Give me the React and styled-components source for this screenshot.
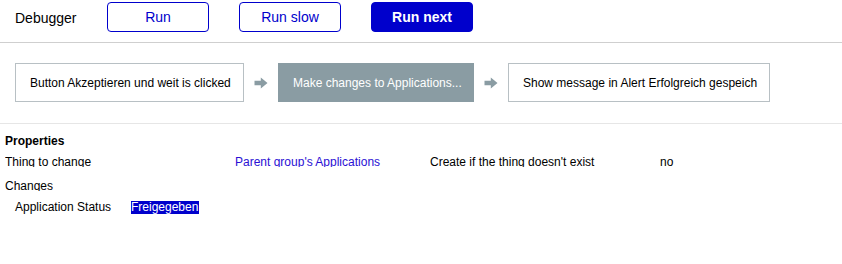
import React from "react";
import styled, { createGlobalStyle } from "styled-components";

const Global = createGlobalStyle`
  html, body { margin: 0; padding: 0; background: #fff; }
  body { font-family: "Liberation Sans", Arial, sans-serif; color: #000; }
`;

const Page = styled.div`
  width: 842px;
  height: 264px;
  overflow: hidden;
`;

const Toolbar = styled.div`
  display: flex;
  align-items: center;
  height: 33px;
  padding: 0 0 9px 15px;
  border-bottom: 1px solid #cfcfcf;
  box-sizing: content-box;
`;

const Title = styled.div`
  font-size: 14px;
  width: 92px;
  line-height: 33px;
  padding-top: 3px;
`;

const Button = styled.button`
  width: 102px;
  height: 30px;
  margin-right: 30px;
  box-sizing: border-box;
  border-radius: 4px;
  border: 1px solid #0000cc;
  background: ${(p) => (p.$primary ? "#0000cc" : "#fff")};
  color: ${(p) => (p.$primary ? "#fff" : "#0000cc")};
  font-family: "Liberation Sans", Arial, sans-serif;
  font-size: 14px;
  font-weight: ${(p) => (p.$primary ? "bold" : "normal")};
  padding: 0;
  cursor: pointer;
`;

const Flow = styled.div`
  display: flex;
  align-items: center;
  padding: 20px 15px 21px 15px;
  border-bottom: 1px solid #e6e6e6;
`;

const Step = styled.div`
  height: 39px;
  box-sizing: border-box;
  padding: 0 14px;
  display: flex;
  align-items: center;
  font-size: 12px;
  white-space: nowrap;
  border: 1px solid ${(p) => (p.$active ? "#8a9ca3" : "#b8c0c4")};
  background: ${(p) => (p.$active ? "#8a9ca3" : "#fff")};
  color: ${(p) => (p.$active ? "#fff" : "#000")};
  width: ${(p) => p.$w}px;
`;

const ArrowWrap = styled.div`
  width: 14px;
  margin: 0 10px;
  display: flex;
  align-items: center;
  height: 12px;
`;

const Arrow = () => (
  <ArrowWrap>
    <svg width="14" height="12" viewBox="0 0 14 12">
      <path d="M0.5 3.8 H6.8 V0.5 L13.5 6 L6.8 11.5 V8.2 H0.5 Z" fill="#8a9ca3" />
    </svg>
  </ArrowWrap>
);

const Props = styled.div`
  padding: 10px 5px 0 5px;
  font-size: 12px;
`;

const Heading = styled.div`
  font-weight: bold;
  line-height: 14px;
  height: 14px;
`;

const Grid = styled.div`
  display: grid;
  grid-template-columns: 230px 195px 230px 1fr;
  margin-top: 7px;
`;

const Cell = styled.div`
  line-height: 14px;
  height: 12px;
  overflow: hidden;
  white-space: nowrap;
  color: ${(p) => (p.$link ? "#2a10d4" : "#000")};
`;

const SubHeading = styled(Cell)`
  margin-top: 12px;
`;

const ChangeRow = styled.div`
  display: flex;
  align-items: center;
  padding-left: 10px;
  margin-top: 9px;
  line-height: 14px;
`;

const ChangeLabel = styled.div`
  width: 116px;
`;

const Highlight = styled.span`
  background: #0000cc;
  color: #fff;
  line-height: 13px;
  padding-right: 1px;
`;

export default function App() {
  return (
    <Page>
      <Global />
      <Toolbar>
        <Title>Debugger</Title>
        <Button>Run</Button>
        <Button>Run slow</Button>
        <Button $primary>Run next</Button>
      </Toolbar>
      <Flow>
        <Step $w={229}>Button Akzeptieren und weit is clicked</Step>
        <Arrow />
        <Step $w={196} $active>Make changes to Applications...</Step>
        <Arrow />
        <Step $w={262}>Show message in Alert Erfolgreich gespeich</Step>
      </Flow>
      <Props>
        <Heading>Properties</Heading>
        <Grid>
          <Cell>Thing to change</Cell>
          <Cell $link>Parent group's Applications</Cell>
          <Cell>Create if the thing doesn't exist</Cell>
          <Cell>no</Cell>
        </Grid>
        <SubHeading>Changes</SubHeading>
        <ChangeRow>
          <ChangeLabel>Application Status</ChangeLabel>
          <Highlight>Freigegeben</Highlight>
        </ChangeRow>
      </Props>
    </Page>
  );
}
